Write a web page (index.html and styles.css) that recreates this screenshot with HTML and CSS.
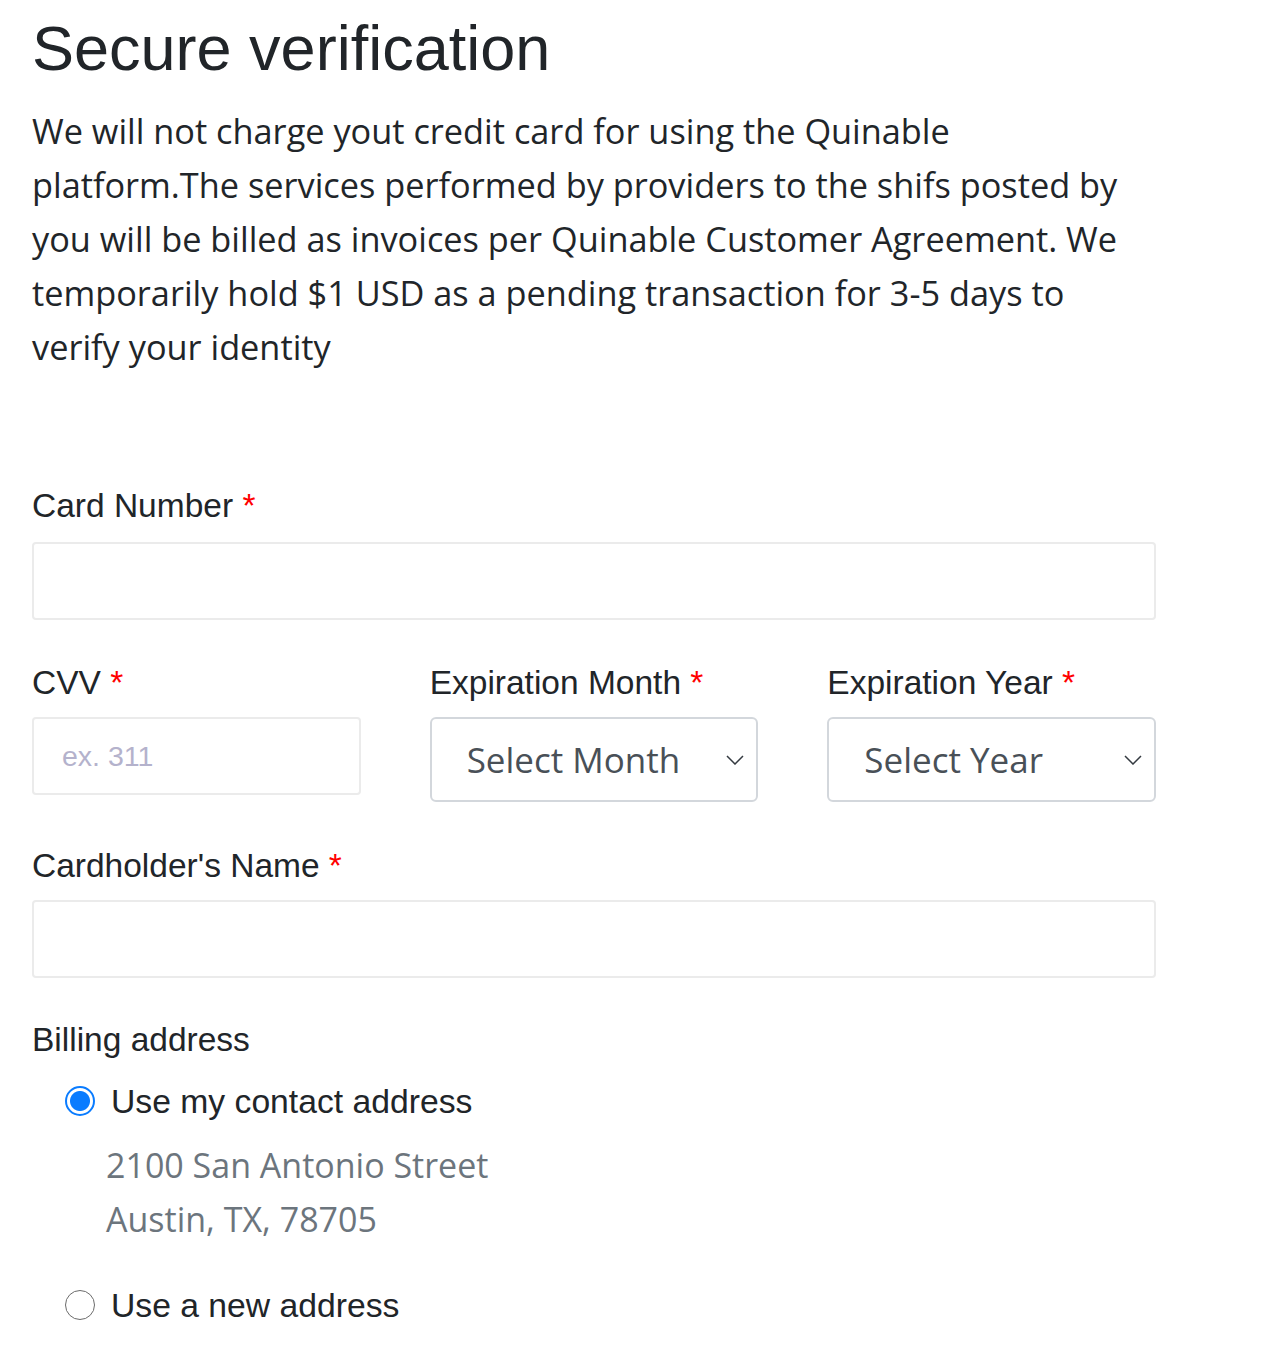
FILE: index.html
```html
<!DOCTYPE html>
<html lang="en">
<head>
<meta charset="utf-8">
<title>Secure verification</title>
<link rel="stylesheet" href="styles.css">
</head>
<body>
<main class="page">
  <h1 class="title">Secure verification</h1>
  <p class="intro">We will not charge yout credit card for using the Quinable platform.The services performed by providers to the shifs posted by you will be billed as invoices per Quinable Customer Agreement. We temporarily hold $1 USD as a pending transaction for 3-5 days to verify your identity</p>

  <form class="form">
    <div class="field">
      <label class="label">Card Number <span class="req">*</span></label>
      <input class="input" type="text">
    </div>

    <div class="row">
      <div class="field">
        <label class="label">CVV <span class="req">*</span></label>
        <input class="input" type="text" placeholder="ex. 311">
      </div>
      <div class="field">
        <label class="label">Expiration Month <span class="req">*</span></label>
        <div class="select">
          <span>Select Month</span>
          <svg class="chev" width="18" height="10" viewBox="0 0 18 10"><path d="M1 1l8 8 8-8" fill="none" stroke="#343a40" stroke-width="1.5"/></svg>
        </div>
      </div>
      <div class="field">
        <label class="label">Expiration Year <span class="req">*</span></label>
        <div class="select">
          <span>Select Year</span>
          <svg class="chev" width="18" height="10" viewBox="0 0 18 10"><path d="M1 1l8 8 8-8" fill="none" stroke="#343a40" stroke-width="1.5"/></svg>
        </div>
      </div>
    </div>

    <div class="field name-field">
      <label class="label">Cardholder's Name <span class="req">*</span></label>
      <input class="input" type="text">
    </div>

    <div class="billing">
      <div class="label">Billing address</div>
      <div class="radio-row">
        <span class="radio checked"></span>
        <span class="radio-label">Use my contact address</span>
      </div>
      <div class="address">2100 San Antonio Street<br>Austin, TX, 78705</div>
      <div class="radio-row second">
        <span class="radio"></span>
        <span class="radio-label">Use a new address</span>
      </div>
    </div>
  </form>
</main>
</body>
</html>
```

FILE: styles.css
```css
* { box-sizing: border-box; }
body {
  margin: 0;
  background: #fff;
  color: #212529;
  font-family: "Liberation Sans", Arial, sans-serif;
}
.page {
  width: 1124px;
  margin-left: 32px;
  padding-top: 10px;
}
.title {
  font-family: "Liberation Sans", Arial, sans-serif;
  font-weight: 400;
  font-size: 63px;
  line-height: 76px;
  margin: 0;
  color: #212529;
}
.intro {
  font-family: "Open Sans", "Noto Sans", sans-serif;
  font-size: 34.3px;
  line-height: 54px;
  margin: 18px 0 0;
  width: 1124px;
  color: #212529;
}
.form {
  margin-top: 112px;
  display: flex;
  flex-direction: column;
}
.field {
  display: flex;
  flex-direction: column;
}
.label {
  font-family: "Liberation Sans", Arial, sans-serif;
  font-size: 33.5px;
  line-height: 40px;
  color: #212529;
  margin-bottom: 16px;
}
.row .label,
.name-field .label { margin-bottom: 14px; }
.req { color: #ff0000; }
.input {
  width: 100%;
  height: 78px;
  border: 2px solid #ebebeb;
  border-radius: 4px;
  padding: 0 28px;
  font-family: "Liberation Sans", Arial, sans-serif;
  font-size: 28.5px;
  color: #212529;
  background: #fff;
  outline: none;
}
.input::placeholder { color: #b4b2cc; }
.row {
  display: grid;
  grid-template-columns: repeat(3, 1fr);
  column-gap: 69px;
  margin-top: 43px;
}
.name-field { margin-top: 44px; }
.select {
  height: 85px;
  border: 2px solid #d3d7dc;
  border-radius: 6px;
  display: flex;
  align-items: center;
  justify-content: space-between;
  padding: 0 12px 0 35px;
  font-family: "Open Sans", "Noto Sans", sans-serif;
  font-size: 35px;
  color: #495057;
}
.chev { display: block; }
.billing {
  margin-top: 42px;
  display: flex;
  flex-direction: column;
}
.billing .label { margin-bottom: 0; }
.radio-row {
  display: flex;
  align-items: center;
  gap: 16px;
  padding-left: 33px;
  margin-top: 21px;
}
.radio {
  width: 30px;
  height: 30px;
  border-radius: 50%;
  border: 1.5px solid #6b6b6b;
  background: #fff;
  flex: none;
}
.radio.checked {
  border: 2px solid #0a7cff;
  background: radial-gradient(circle, #0a7cff 0 9.5px, #fff 10.5px);
}
.radio-label {
  font-family: "Liberation Sans", Arial, sans-serif;
  font-size: 33.7px;
  line-height: 40px;
  color: #212529;
}
.address {
  font-family: "Open Sans", "Noto Sans", sans-serif;
  font-size: 34px;
  line-height: 54px;
  color: #6c757d;
  padding-left: 74px;
  margin-top: 17px;
}
.radio-row.second { margin-top: 39px; }
```
